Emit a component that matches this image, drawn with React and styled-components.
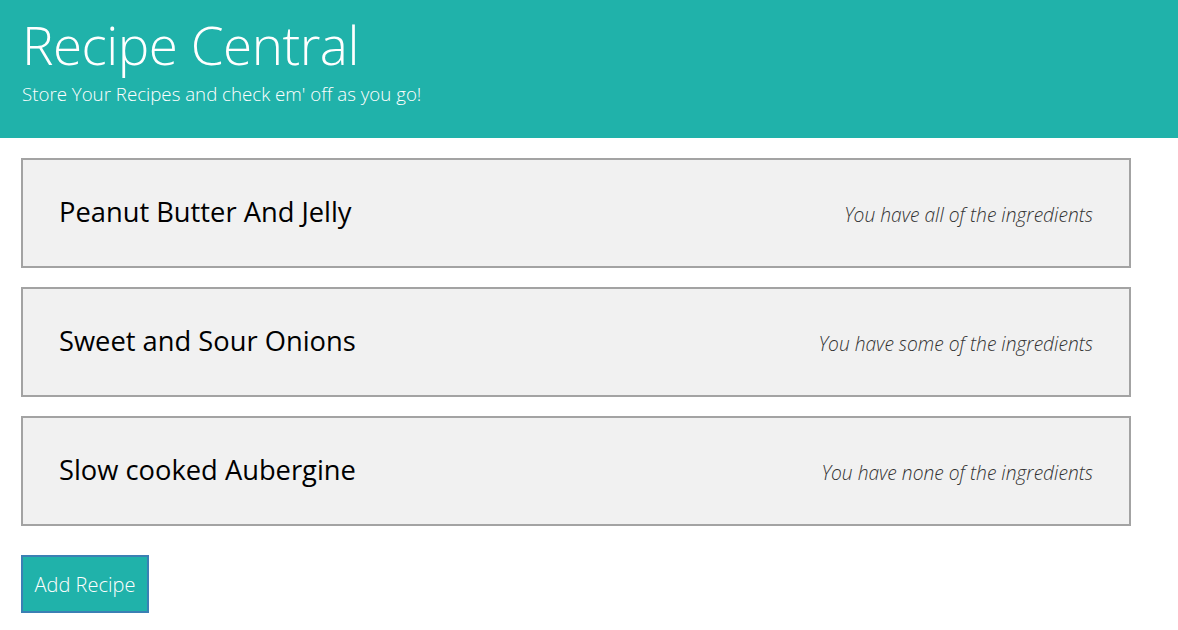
import React from "react";
import styled, { createGlobalStyle } from "styled-components";

const Global = createGlobalStyle`
  html, body { margin: 0; padding: 0; background: #fff; }
  body { font-family: "Open Sans", "Noto Sans", sans-serif; }
`;

const Header = styled.header`
  background: #20b2aa;
  height: 138px;
  box-sizing: border-box;
  padding: 11px 22px 0;
  color: #fff;
`;

const Title = styled.h1`
  margin: 0;
  font-weight: 300;
  font-size: 53px;
  line-height: 68px;
  letter-spacing: -0.5px;
`;

const Subtitle = styled.p`
  margin: 3px 0 0;
  font-weight: 300;
  font-size: 18.7px;
  line-height: 24px;
`;

const Main = styled.main`
  width: 1110px;
  margin: 20px 0 0 21px;
  display: flex;
  flex-direction: column;
  gap: 19px;
`;

const Card = styled.div`
  height: 110px;
  box-sizing: border-box;
  background: #f1f1f1;
  border: 2px solid #a3a3a3;
  display: flex;
  align-items: center;
  justify-content: space-between;
  padding: 0 36px;
`;

const CardTitle = styled.h2`
  margin: 0 0 4px;
  font-weight: 400;
  font-size: 27.3px;
  color: #000;
`;

const Status = styled.span`
  font-weight: 300;
  font-style: italic;
  font-size: 19.2px;
  color: #333;
  margin-top: 2px;
`;

const AddButton = styled.button`
  align-self: flex-start;
  margin-top: 10px;
  width: 128px;
  height: 58px;
  background: #20b2aa;
  border: 2px solid #3b80b4;
  color: #fff;
  font-family: inherit;
  font-weight: 300;
  font-size: 20px;
  padding: 0;
  cursor: pointer;
`;

const recipes = [
  { name: "Peanut Butter And Jelly", status: "all" },
  { name: "Sweet and Sour Onions", status: "some" },
  { name: "Slow cooked Aubergine", status: "none" },
];

export default function App() {
  return (
    <>
      <Global />
      <Header>
        <Title>Recipe Central</Title>
        <Subtitle>Store Your Recipes and check em' off as you go!</Subtitle>
      </Header>
      <Main>
        {recipes.map((r) => (
          <Card key={r.name}>
            <CardTitle>{r.name}</CardTitle>
            <Status>You have {r.status} of the ingredients</Status>
          </Card>
        ))}
        <AddButton>Add Recipe</AddButton>
      </Main>
    </>
  );
}
